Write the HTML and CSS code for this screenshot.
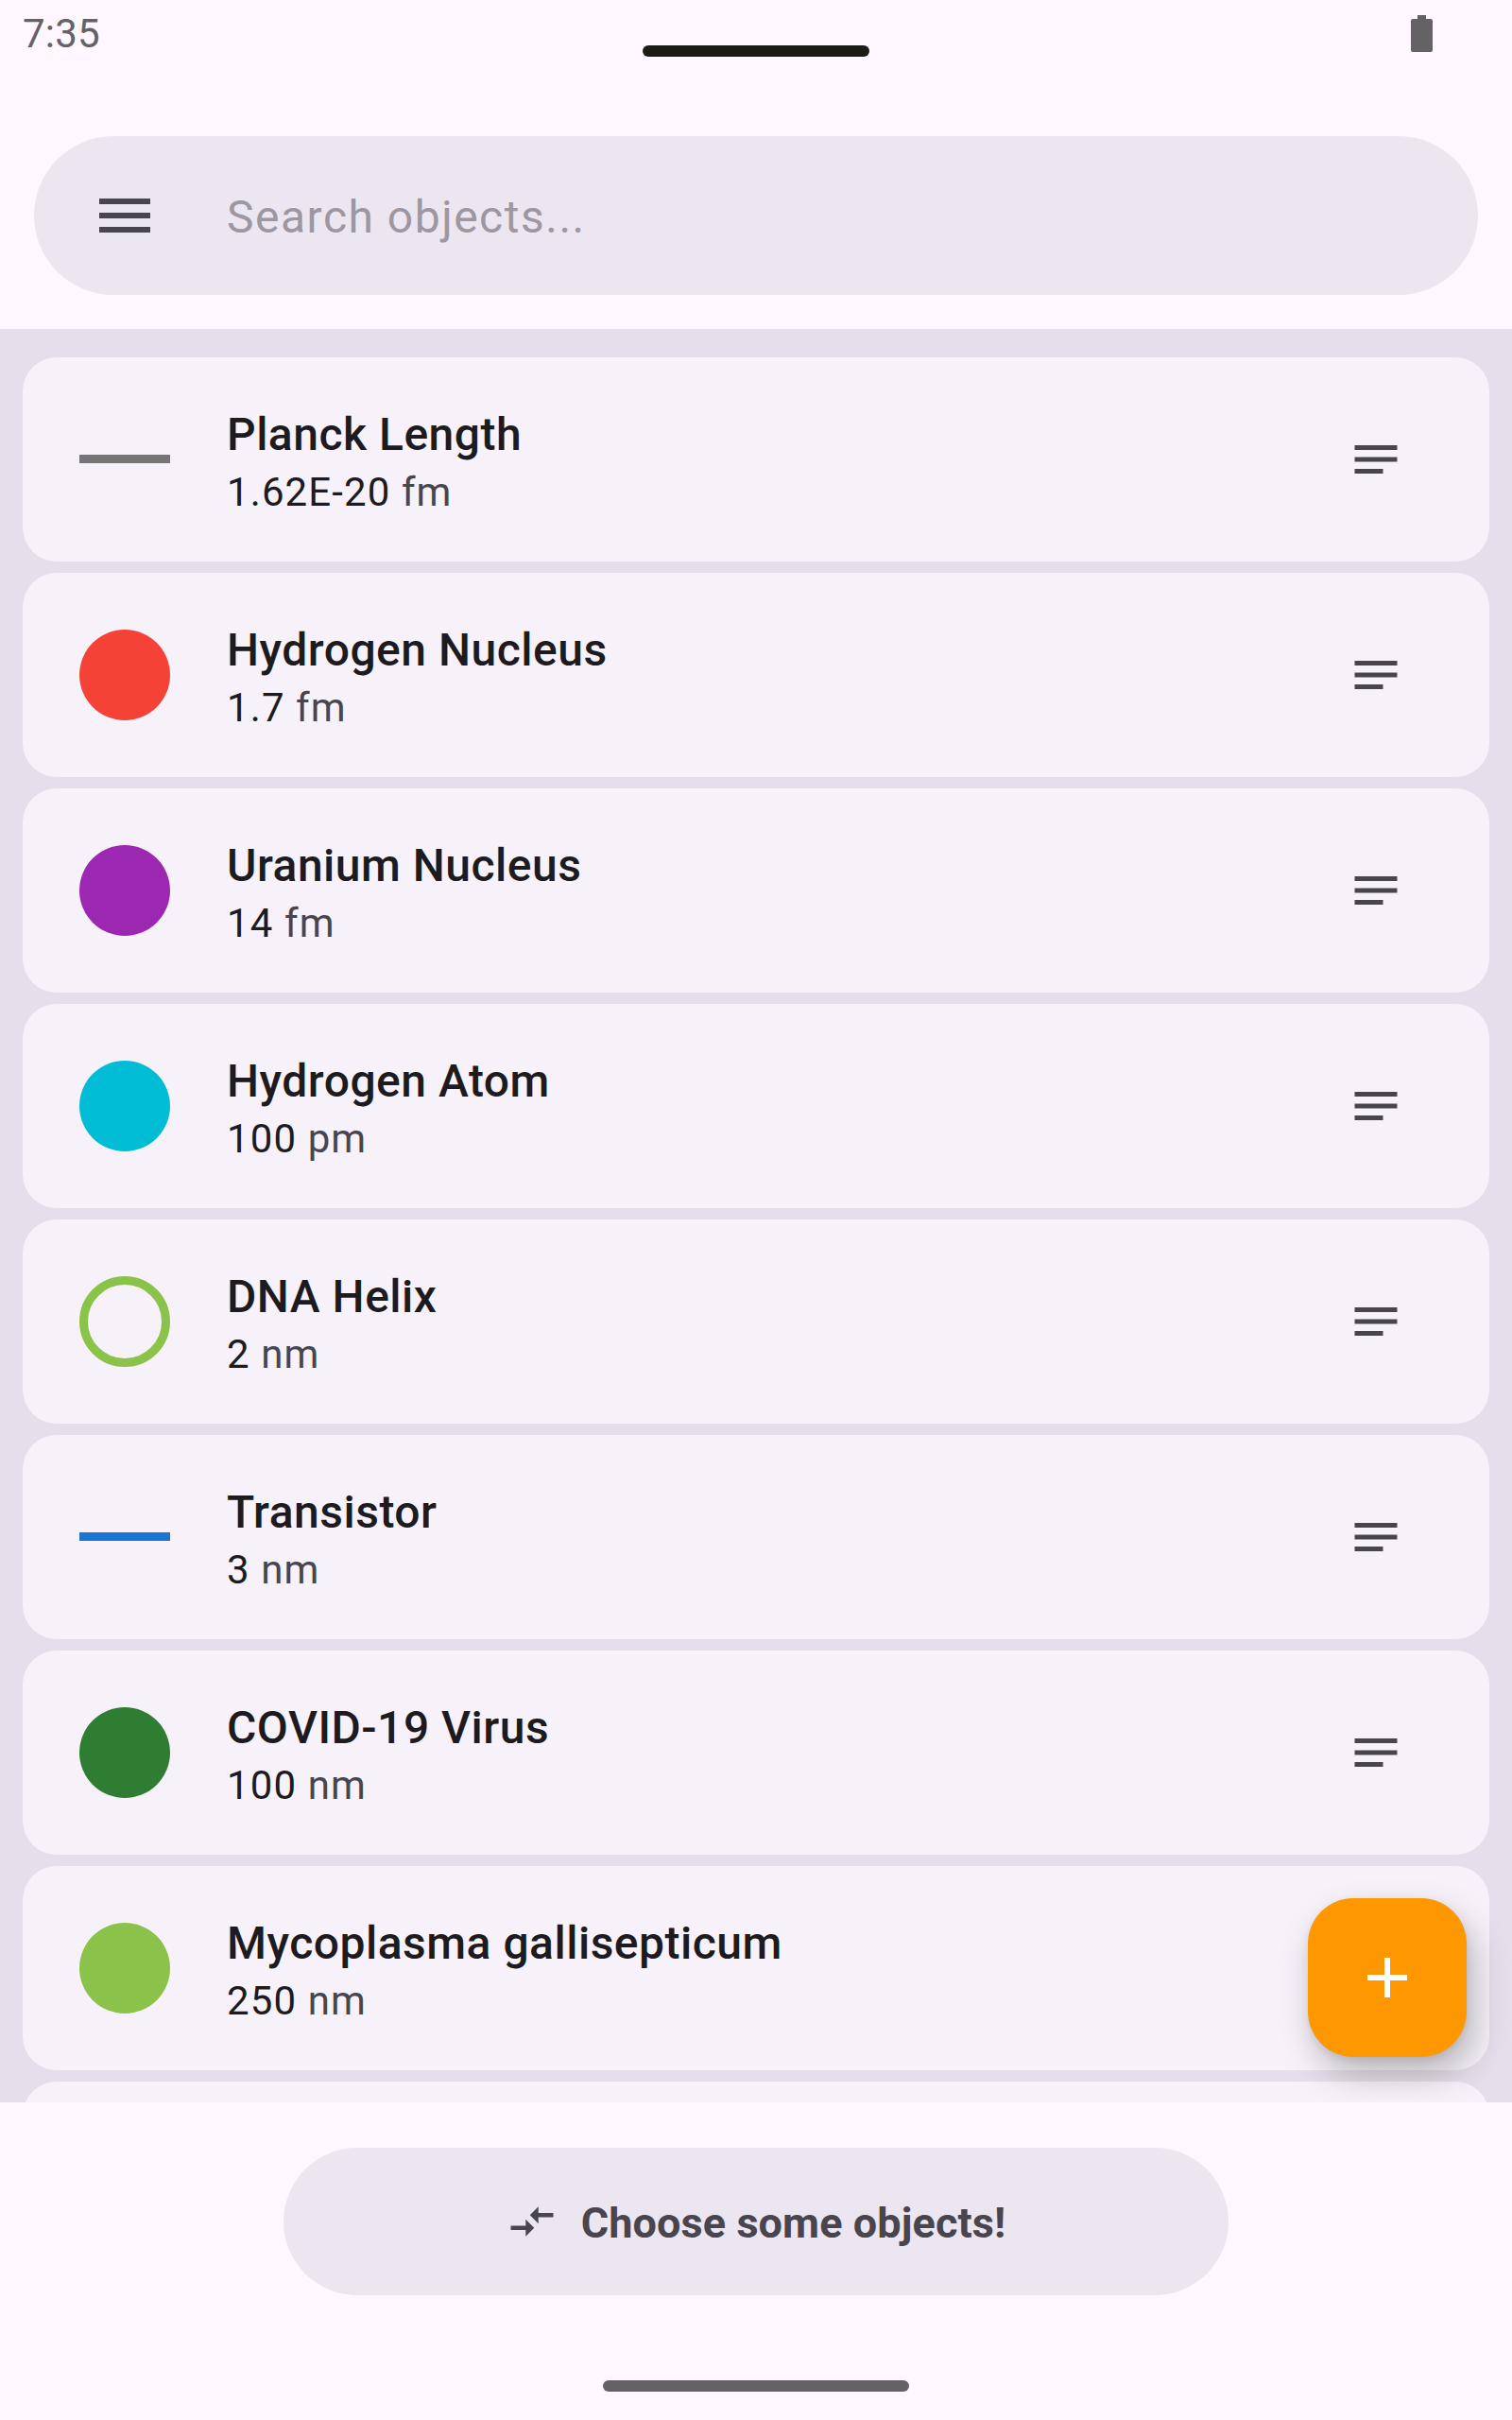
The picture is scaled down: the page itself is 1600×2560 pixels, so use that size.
FILE: index.html
```html
<!DOCTYPE html>
<html lang="en">
<head>
  <meta charset="UTF-8">
  <meta name="viewport" content="width=device-width, initial-scale=1.0">
  <title>Objects</title>
  <link rel="stylesheet" href="styles.css">
</head>
<body>
  <!-- Shared icons -->
  <svg class="icon-defs" width="0" height="0">
    <symbol id="notes" viewBox="0 0 24 24">
      <path d="M3 18h12v-2H3v2zM3 6v2h18V6H3zm0 7h18v-2H3v2z"/>
    </symbol>
  </svg>

  <div class="screen">
    <header class="status-bar">
      <span class="clock">7:35</span>
      <div class="camera-bar"></div>
      <svg class="battery" viewBox="0 0 23 39">
        <path d="M7 0h9v4h5a2 2 0 0 1 2 2v31a2 2 0 0 1-2 2H2a2 2 0 0 1-2-2V6a2 2 0 0 1 2-2h5z"/>
      </svg>
    </header>

    <div class="search-bar">
      <svg class="menu-icon" viewBox="0 0 24 24"><path d="M3 18h18v-2H3v2zm0-5h18v-2H3v2zm0-7v2h18V6H3z"/></svg>
      <span class="search-hint">Search objects...</span>
    </div>

    <main class="object-area">
      <ul class="object-list">
        <li class="object-card">
          <div class="shape line grey"></div>
          <div class="object-text">
            <div class="object-name">Planck Length</div>
            <div class="object-size">1.62E-20 <span class="unit">fm</span></div>
          </div>
          <svg class="notes-icon"><use href="#notes"/></svg>
        </li>
        <li class="object-card">
          <div class="shape circle red"></div>
          <div class="object-text">
            <div class="object-name">Hydrogen Nucleus</div>
            <div class="object-size">1.7 <span class="unit">fm</span></div>
          </div>
          <svg class="notes-icon"><use href="#notes"/></svg>
        </li>
        <li class="object-card">
          <div class="shape circle purple"></div>
          <div class="object-text">
            <div class="object-name">Uranium Nucleus</div>
            <div class="object-size">14 <span class="unit">fm</span></div>
          </div>
          <svg class="notes-icon"><use href="#notes"/></svg>
        </li>
        <li class="object-card">
          <div class="shape circle cyan"></div>
          <div class="object-text">
            <div class="object-name">Hydrogen Atom</div>
            <div class="object-size">100 <span class="unit">pm</span></div>
          </div>
          <svg class="notes-icon"><use href="#notes"/></svg>
        </li>
        <li class="object-card">
          <div class="shape ring"></div>
          <div class="object-text">
            <div class="object-name">DNA Helix</div>
            <div class="object-size">2 <span class="unit">nm</span></div>
          </div>
          <svg class="notes-icon"><use href="#notes"/></svg>
        </li>
        <li class="object-card">
          <div class="shape line blue"></div>
          <div class="object-text">
            <div class="object-name">Transistor</div>
            <div class="object-size">3 <span class="unit">nm</span></div>
          </div>
          <svg class="notes-icon"><use href="#notes"/></svg>
        </li>
        <li class="object-card">
          <div class="shape circle dark-green"></div>
          <div class="object-text">
            <div class="object-name">COVID-19 Virus</div>
            <div class="object-size">100 <span class="unit">nm</span></div>
          </div>
          <svg class="notes-icon"><use href="#notes"/></svg>
        </li>
        <li class="object-card">
          <div class="shape circle green"></div>
          <div class="object-text">
            <div class="object-name">Mycoplasma gallisepticum</div>
            <div class="object-size">250 <span class="unit">nm</span></div>
          </div>
        </li>
        <li class="object-card"></li>
      </ul>

      <button class="add-button" aria-label="Add">
        <svg viewBox="0 0 24 24"><path d="M19 13h-6v6h-2v-6H5v-2h6V5h2v6h6v2z"/></svg>
      </button>
    </main>

    <footer class="bottom-bar">
      <button class="compare-button">
        <svg viewBox="0 0 24 24"><path d="M9.01 14H2v2h7.01v3L13 15l-3.99-4v3zm5.98-1v-3H22V8h-7.01V5L11 9l3.99 4z"/></svg>
        <span>Choose some objects!</span>
      </button>
      <div class="home-bar"></div>
    </footer>
  </div>
</body>
</html>
```

FILE: styles.css
```css
* {
  margin: 0;
  padding: 0;
  box-sizing: border-box;
}

body {
  font-family: Roboto, sans-serif;
  background: #fef7ff;
  color: #1d1b20;
}

.icon-defs {
  display: none;
}

.screen {
  height: 2560px;
  display: flex;
  flex-direction: column;
  overflow: hidden;
}

/* Status bar */
.status-bar {
  height: 144px;
  padding: 0 84px 0 24px;
  display: grid;
  grid-template-columns: 1fr 240px 1fr;
  align-items: start;
  flex-shrink: 0;
}

.clock {
  margin-top: 11px;
  font-size: 42px;
  line-height: 49px;
  letter-spacing: 0.2px;
  color: #656266;
}

.camera-bar {
  height: 12px;
  margin: 48px 0 0 30px;
  width: 240px;
  border-radius: 6px;
  background: #1c1b14;
}

.battery {
  width: 23px;
  height: 39px;
  margin-top: 16px;
  justify-self: end;
  fill: #656266;
}

/* Search */
.search-bar {
  height: 168px;
  margin: 0 36px 36px;
  padding: 0 60px;
  display: flex;
  align-items: center;
  gap: 72px;
  border-radius: 84px;
  background: #ece6f0;
  flex-shrink: 0;
}

.menu-icon {
  width: 72px;
  height: 72px;
  fill: #49454f;
}

.search-hint {
  padding-top: 3px;
  font-size: 48px;
  line-height: 72px;
  letter-spacing: 1.5px;
  color: #9d97a1;
}

/* Object list */
.object-area {
  height: 1876px;
  position: relative;
  overflow: hidden;
  background: #e6dfeb;
  flex-shrink: 0;
}

.object-list {
  list-style: none;
  padding: 30px 24px;
  display: flex;
  flex-direction: column;
  gap: 12px;
}

.object-card {
  height: 216px;
  padding: 0 90px 0 60px;
  display: flex;
  align-items: center;
  border-radius: 36px;
  background: #f7f2fa;
  flex-shrink: 0;
}

.shape {
  width: 96px;
  margin-right: 60px;
}

.circle,
.ring {
  height: 96px;
  border-radius: 50%;
}

.ring {
  border: 9px solid #8bc34a;
}

.line {
  height: 9px;
  margin-bottom: 1px;
}

.grey { background: #757575; }
.red { background: #f44336; }
.purple { background: #9c27b0; }
.cyan { background: #00bcd4; }
.blue { background: #1976d2; }
.dark-green { background: #2e7d32; }
.green { background: #8bc34a; }

.object-text {
  flex-grow: 1;
  padding-top: 2px;
}

.object-name {
  font-size: 48px;
  font-weight: 500;
  line-height: 68px;
  letter-spacing: 0.5px;
}

.object-size {
  font-size: 42px;
  line-height: 54px;
  letter-spacing: 1.1px;
}

.unit {
  color: #49454f;
}

.notes-icon {
  width: 60px;
  height: 60px;
  fill: #49454f;
}

/* Floating add button, lies over the list */
.add-button {
  position: absolute;
  right: 48px;
  bottom: 48px;
  width: 168px;
  height: 168px;
  display: flex;
  align-items: center;
  justify-content: center;
  border: none;
  border-radius: 48px;
  background: #ff9800;
  box-shadow: 8px 18px 36px rgba(0, 0, 0, 0.25), 0 3px 9px rgba(0, 0, 0, 0.08);
}

.add-button svg {
  width: 72px;
  height: 72px;
  fill: #fff;
}

/* Bottom */
.bottom-bar {
  flex-grow: 1;
  padding: 48px 0 30px;
  display: flex;
  flex-direction: column;
  align-items: center;
  justify-content: space-between;
}

.compare-button {
  width: 1000px;
  height: 156px;
  display: flex;
  align-items: center;
  justify-content: center;
  gap: 25px;
  border: none;
  border-radius: 78px;
  background: #ece6f0;
  color: #49454f;
  font-family: inherit;
  font-size: 45px;
  font-weight: 700;
  letter-spacing: 0.1px;
}

.compare-button span {
  padding-top: 2px;
}

.compare-button svg {
  width: 54px;
  height: 54px;
  fill: #49454f;
}

.home-bar {
  width: 324px;
  height: 12px;
  border-radius: 6px;
  background: #656266;
}
```
